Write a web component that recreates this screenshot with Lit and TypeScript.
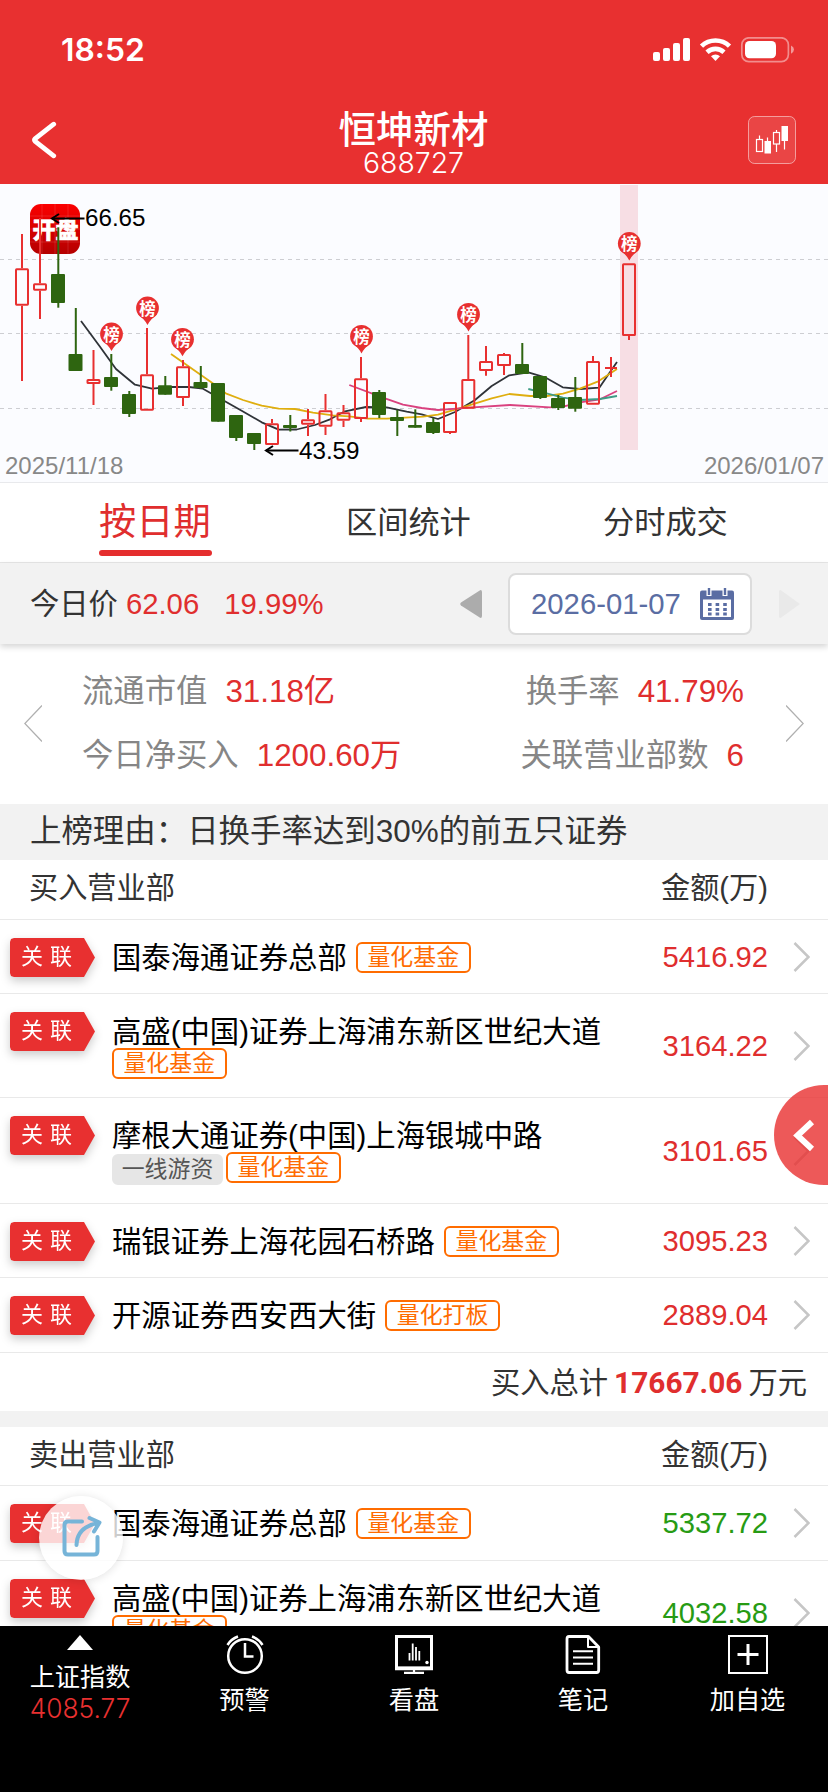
import { LitElement, html, svg, css } from "lit";
import { customElement, property } from "lit/decorators.js";

type Candle = [x: number, high: number, low: number, top: number, bottom: number, up: boolean];

const CANDLES: Candle[] = [
  [22, 234, 381, 268.3, 305.7, true],
  [40, 218, 319, 283.3, 290.7, true],
  [58, 227.3, 307.7, 274, 303, false],
  [75.5, 308, 371, 354, 371, false],
  [93.5, 350, 405, 379, 384, true],
  [111, 354, 390.7, 377, 387, false],
  [129, 391, 417, 394, 414, false],
  [147, 328, 410.7, 374.3, 410.7, true],
  [165, 376, 394.7, 385.3, 394.7, false],
  [183, 360, 406, 366.3, 398, true],
  [200.5, 366, 388.7, 382, 388, false],
  [218, 383, 421.7, 383, 421.7, false],
  [236, 415, 441, 415, 438, false],
  [254, 433, 450, 433, 444, false],
  [272, 419, 445, 423.3, 445, true],
  [290, 415, 431.5, 425, 428, false],
  [308, 409, 436, 419.3, 424.7, true],
  [325.5, 394, 435, 410.3, 426.7, true],
  [343.5, 405, 427, 412.3, 420.7, true],
  [361, 357, 422, 378.3, 419, true],
  [379, 390, 418, 392, 415, false],
  [397, 410, 436, 417, 421, false],
  [415, 409.3, 427.7, 425, 427.7, false],
  [433, 418, 434, 422, 433, false],
  [450, 402, 434, 402, 433, true],
  [468.3, 335, 408.7, 379, 408.7, true],
  [486, 346, 375.7, 361, 371, true],
  [504, 353, 375, 354, 366, true],
  [522, 343, 374, 364, 374, false],
  [540, 376, 399, 376, 398, false],
  [558, 395, 410, 398, 408, false],
  [575, 377, 411.7, 397, 408.7, false],
  [593, 356, 404.7, 361, 404.7, true],
  [611, 357, 377, 367, 369, true],
  [629, 263.3, 340, 263.3, 336, true],
];

const AVERAGES: [string, string][] = [
  ["#2f3338", "81,321 100,346.7 116,369 135,384.7 152,388.7 170,387 189,387 203,388.7 222.7,400 241.7,410.7 261.7,422.3 278.7,429.7 296.7,429.5 315,425 330,419.3 345,411.3 366,407 386.7,407.3 406.7,411.7 421.7,414.3 438,419 455,412 475,400 491.7,386 509.3,375.3 528.3,372.3 545,377.3 562.7,387.3 580,389 599.3,387.7 608,375 617,362"],
  ["#dfae0f", "171,354 212.7,383.3 225.7,393.3 243,400 261.7,405.7 278.7,408.7 295,409 313,412.7 333,415.3 349,416.3 368,418.7 386.7,418.7 405,417.7 423,416.7 438,414.7 461.7,407.7 491.7,398.3 509.3,394 530,396 546.7,396 563,393.7 580,388.7 598.3,381.3 617,369"],
  ["#d9417f", "349.3,385 385,398.3 403,404.7 421.7,408 438,410 456.7,408.7 473,407.3 510,405 550,407.3 563,406.7 580,402.3 600,399.3 617,391"],
  ["#3f9c86", "528.3,389 546.7,393.3 563,397.7 580,400 600,399 617,396"],
];

const PINS: [number, number][] = [
  [111.5, 335], [147.5, 309], [182.5, 340.3], [361.5, 337.4], [468.5, 315.4], [629.3, 244.5],
];

@customElement("kline-chart")
class KlineChart extends LitElement {
  static styles = css`
    :host { display: block; height: 298px; background: #fbfcff; border-bottom: 1px solid #e8e9ec; }
    svg { display: block; }
    .num { font: 24.2px "Liberation Sans", Arial, sans-serif; fill: #000; }
    .date { font: 24px "Liberation Sans", Arial, sans-serif; fill: #888; }
    .pin { font: 700 16.5px "Noto Sans CJK SC", sans-serif; fill: #fff; text-anchor: middle; }
    .app { font: 900 23px "Noto Sans CJK SC", sans-serif; fill: #fff; text-anchor: middle; }
  `;

  private candle([x, high, low, top, bottom, up]: Candle) {
    if (!up) {
      return svg`<path d="M${x + 0.3} ${high}V${low}" stroke="#2e6510" stroke-width="2"/>
        <rect x=${x - 7} y=${top} width="14" height=${bottom - top} rx="1" fill="#2e6510"/>`;
    }
    const flat = bottom - top < 3;
    return svg`<g fill="none" stroke="#e83030" stroke-width="2">
      <path d="M${x} ${high}V${flat ? low : top}M${x} ${bottom}V${low}"/>
      ${flat
        ? svg`<path d=${`M${x - 6} 368H${x + 6}`}/>`
        : svg`<rect x=${x - 6} y=${top + 1} width="12" height=${bottom - top - 2} rx="0.6"/>`}
    </g>`;
  }

  render() {
    return html`<svg width="828" height="298" viewBox="0 184 828 298">
      <defs>
        <linearGradient id="app" x1="0" y1="0" x2="0" y2="1">
          <stop offset="0" stop-color="#fb0000"/><stop offset="1" stop-color="#b40000"/>
        </linearGradient>
      </defs>
      <path d="M0 259.5H828M0 333.5H828M0 408.5H828" stroke="#cdced2" stroke-width="1" stroke-dasharray="4 4"/>
      <rect x="620" y="185" width="18" height="265" fill="#f7dee4"/>
      <rect x="30" y="204" width="50" height="50" rx="11" fill="url(#app)"/>
      <path d="M42 204V254M55 204V254M68 204V254M30 216H80M30 229H80M30 242H80" stroke="#fff" stroke-opacity=".12"/>
      <text class="app" x="55.5" y="238" stroke="#fff" stroke-width=".6">开盘</text>
      ${AVERAGES.map(([c, p]) => svg`<polyline points=${p} fill="none" stroke=${c} stroke-width="1.8" stroke-linejoin="round"/>`)}
      ${CANDLES.map((c) => this.candle(c))}
      ${PINS.map(([x, y]) => svg`
        <path d=${`M${x - 9.5} ${y + 5.5}Q${x - 3} ${y + 10} ${x} ${y + 16}Q${x + 3} ${y + 10} ${x + 9.5} ${y + 5.5}Z`} fill="#e83030"/>
        <circle cx=${x} cy=${y - 1} r="11.4" fill="#e83030"/>
        <text class="pin" x=${x} y=${y + 5.6}>榜</text>`)}
      <g fill="none" stroke="#000" stroke-width="2">
        <path d="M52 218.5H84.5"/><path d="M59 214L52 218.5L59 223"/>
        <path d="M266 450.5H298.5"/><path d="M273 446L266 450.5L273 455"/>
      </g>
      <text class="num" x="85" y="226">66.65</text>
      <text class="num" x="299" y="459">43.59</text>
      <text class="date" x="5" y="473.5">2025/11/18</text>
      <text class="date" x="824" y="473.5" text-anchor="end">2026/01/07</text>
    </svg>`;
  }
}

interface Seat {
  name: string;
  tags: string[];
  amount: string;
  height: number;
  wrap?: boolean;
}

const BUY: Seat[] = [
  { name: "国泰海通证券总部", tags: ["量化基金"], amount: "5416.92", height: 74 },
  { name: "高盛(中国)证券上海浦东新区世纪大道", tags: ["量化基金"], amount: "3164.22", height: 104, wrap: true },
  { name: "摩根大通证券(中国)上海银城中路", tags: ["一线游资", "量化基金"], amount: "3101.65", height: 106, wrap: true },
  { name: "瑞银证券上海花园石桥路", tags: ["量化基金"], amount: "3095.23", height: 74 },
  { name: "开源证券西安西大街", tags: ["量化打板"], amount: "2889.04", height: 75 },
];

const SELL: Seat[] = [
  { name: "国泰海通证券总部", tags: ["量化基金"], amount: "5337.72", height: 75 },
  { name: "高盛(中国)证券上海浦东新区世纪大道", tags: ["量化基金"], amount: "4032.58", height: 104, wrap: true },
];

@customElement("seat-row")
class SeatRow extends LitElement {
  @property({ attribute: false }) seat!: Seat;
  @property({ type: Boolean }) sell = false;

  static styles = css`
    :host { display: block; }
    .row { display: flex; box-sizing: border-box; border-bottom: 1px solid #e9e9e9; padding-left: 10px; background: #fff; }
    .flag { filter: drop-shadow(0 4px 5px rgba(0, 0, 0, .2)); margin-top: 18px; height: 39px; }
    .ribbon {
      box-sizing: border-box; width: 85px; height: 39px; padding-left: 11px; background: #e83030; color: #fff;
      clip-path: polygon(0 4px, 1px 1px, 4px 0, 74px 0, 85px 50%, 74px 100%, 4px 100%, 1px 38px, 0 35px);
      font-size: 22px; line-height: 38px; display: flex; gap: 7px;
    }
    .main { margin: 18px 0 0 17px; flex: 1; display: flex; flex-wrap: wrap; align-content: flex-start; white-space: nowrap; }
    .name { font-size: 29.35px; line-height: 40px; height: 38px; color: #000; }
    .wrap .name { width: 100%; height: 36px; }
    .chip {
      box-sizing: border-box; height: 31px; min-width: 115px; border: 2px solid #ff6c00; border-radius: 6px; color: #ff6c00;
      font-size: 22.9px; line-height: 26px; text-align: center; margin: 4px 0 0 9px;
    }
    .wrap .chip { margin: 0; min-width: 114.5px; }
    .wrap .plain + .chip { margin-left: 3px; }
    .wrap .chip.plain { margin-top: 2px; border-color: #e6e6e6; background: #e6e6e6; color: #555; min-width: 111px; }
    .amount { display: flex; align-items: center; font-size: 29.2px; line-height: 34px; color: #e02e2e; padding-right: 25px; }
    .sell { color: #279b14; }
    .go { align-self: center; margin-right: 18px; display: block; }
  `;

  render() {
    const s = this.seat;
    return html`<div class="row ${s.wrap ? "wrap" : ""}" style="height:${s.height}px">
      <div class="flag"><div class="ribbon"><span>关</span><span>联</span></div></div>
      <div class="main">
        <span class="name">${s.name}</span>
        ${s.tags.map((t) => html`<span class="chip ${t === "一线游资" ? "plain" : ""}">${t}</span>`)}
      </div>
      <div class="amount ${this.sell ? "sell" : ""}">${s.amount}</div>
      <svg class="go" width="17" height="30" viewBox="0 0 17 30"><path d="M1.500 1L15.500 15L1.500 29" fill="none" stroke="#c6c6c6" stroke-width="2.500"/></svg>
    </div>`;
  }
}

@customElement("app-root")
class AppRoot extends LitElement {
  static styles = css`
    :host {
      display: block; position: relative; width: 828px; height: 1792px; overflow: hidden; background: #fff;
      font-family: "Liberation Sans", Arial, "Noto Sans CJK SC", sans-serif; color: #333; white-space: nowrap;
    }
    svg { display: block; }
    .red { color: #e02e2e; }
    .main { height: 1626px; overflow: hidden; }
    header { height: 184px; background: #e83030; color: #fff; box-sizing: border-box; padding-top: 30px; }
    .status { height: 39px; display: flex; justify-content: space-between; align-items: center; padding: 0 34px 0 61px; }
    .clock { font: 600 31.8px/39px Inter, sans-serif; }
    .titlebar { display: flex; justify-content: space-between; height: 115px; padding: 0 32px 0 31px; align-items: center; }
    .title { text-align: center; padding: 29px 0 0 22px; }
    .title h1 { margin: 0; font: 500 37.5px/43px "Noto Sans CJK SC", sans-serif; }
    .title p { margin: 0; font: 300 28.4px/30px Inter, sans-serif; }
    .back { margin-top: 26px; }
    .kbtn { margin-top: 27px; }
    .tabs { display: flex; height: 80px; box-sizing: border-box; padding-left: 99px; border-bottom: 1px solid #e6e6e6; align-items: flex-start; }
    .tab { font-size: 31.2px; line-height: 79px; margin-left: 134px; width: 125px; }
    .tab + .tab + .tab { margin-left: 132px; }
    .tab.on { margin: 0; width: 113px; font-size: 37.3px; color: #e02e2e; }
    .label { display: block; height: 67px; line-height: 79px; }
    .bar { display: block; height: 6px; border-radius: 3px; background: #e52e2e; }
    .price { position: relative; height: 81px; background: #f2f2f2; box-shadow: 0 3px 6px rgba(0, 0, 0, .16); display: flex; align-items: center; padding: 0 28px 0 30px; font-size: 29.3px; line-height: 40px; }
    .price .now { margin-left: 8px; }
    .price .pct { margin-left: 25px; }
    .prev { margin-left: auto; }
    .date { box-sizing: border-box; width: 244px; height: 62px; margin: 0 27px 0 26px; border: 2px solid #dcdcdc; border-radius: 8px; background: #fff; display: flex; align-items: center; justify-content: space-between; padding: 0 16px 0 21px; color: #5a6da3; }
    .stats { height: 160px; display: flex; padding: 0 24px; align-items: center; box-sizing: border-box; padding-bottom: 2px; }
    .grid { flex: 1; display: grid; grid-template-columns: auto auto; justify-content: space-between; row-gap: 22px; padding: 1px 42px 0 40px; font-size: 31.35px; line-height: 42px; color: #868686; }
    .grid .r { text-align: right; }
    .grid .red { margin-left: 18px; }
    .reason { height: 56px; background: #f2f2f2; padding-left: 30px; font-size: 31.45px; line-height: 56px; }
    .head { display: flex; justify-content: space-between; box-sizing: border-box; height: 60px; border-bottom: 1px solid #e9e9e9; padding: 0 60px 0 29px; font-size: 29.2px; line-height: 56px; }
    .head.s { height: 59px; }
    .total { height: 58px; padding-right: 21px; text-align: right; font-size: 29.3px; line-height: 60px; }
    .total b { font: 700 29.8px/58px Roboto, sans-serif; color: #e02e2e; margin: 0 6px; }
    .gap { height: 16px; background: #f2f2f2; }
    nav { height: 166px; background: #000; color: #fff; display: grid; grid-template-columns: 160px 169px 170px 168px 161px; font-size: 25.2px; }
    .item { display: flex; flex-direction: column; align-items: center; padding-top: 9px; line-height: 38px; }
    .item svg { margin-bottom: 6px; }
    .item.index svg { margin-bottom: 8px; }
    .idx { font: 300 26.3px/26px Inter, sans-serif; color: #e83030; }
    .drawer { position: absolute; right: 0; top: 1085px; width: 54px; height: 100px; border-radius: 50px 0 0 50px; background: rgba(232, 48, 48, .8); }
    .share { position: absolute; left: 39px; top: 1496px; width: 84px; height: 84px; border-radius: 50%; background: rgba(255, 255, 255, .8); box-shadow: 0 1px 10px rgba(0, 0, 0, .12); }
  `;

  render() {
    return html`
      <div class="main">
        <header>
          <div class="status">
            <span class="clock">18:52</span>
            <svg width="141" height="26" viewBox="653 37 141 26" fill="#fff">
              <rect x="653" y="52" width="7" height="9" rx="2"/><rect x="663" y="48" width="7" height="13" rx="2"/>
              <rect x="673" y="43" width="7" height="18" rx="2"/><rect x="683" y="38" width="7" height="23" rx="2"/>
              <path d="M701.500 46.200A20 20 0 0 1 729.500 46.200M707 52.200A12.500 12.500 0 0 1 724 52.200" fill="none" stroke="#fff" stroke-width="4.600"/>
              <path d="M715.500 61L711 56.300A6.500 6.500 0 0 1 720 56.300Z"/>
              <rect x="741.800" y="37.800" width="46.600" height="23.800" rx="7" fill="none" stroke="#fff" stroke-opacity=".45" stroke-width="1.700"/>
              <rect x="745" y="41" width="31" height="17.300" rx="4.500"/>
              <path d="M791 45.500Q794 47 794 49.600T791 53.700Z" fill-opacity=".5"/>
            </svg>
          </div>
          <div class="titlebar">
            <svg class="back" width="26" height="38" viewBox="31 121 26 38"><path d="M53.700 124.200L35.300 138.500Q33.800 140 35.300 141.500L53.700 155.800" fill="none" stroke="#fff" stroke-width="4.800" stroke-linecap="round"/></svg>
            <div class="title"><h1>恒坤新材</h1><p>688727</p></div>
            <svg class="kbtn" width="48" height="48" viewBox="748 116 48 48">
              <rect x="748.500" y="116.500" width="47" height="47" rx="6" fill="#fff" fill-opacity=".1" stroke="#fff" stroke-opacity=".5"/>
              <g fill="none" stroke="#fff" stroke-width="1.200">
                <path d="M759.500 135.500V139M767.500 137.500V142M776.500 130V133M776.500 144V152M784.500 140V149.500"/>
                <rect x="756.500" y="139.500" width="6" height="12"/><rect x="773.500" y="132.500" width="6" height="11.500"/>
              </g>
              <path d="M764.500 141h6.500v12.500h-6.500zM781.500 126h6.500v15h-6.500z" fill="#fff"/>
            </svg>
          </div>
        </header>
        <kline-chart></kline-chart>
        <div class="tabs">
          <div class="tab on"><span class="label">按日期</span><span class="bar"></span></div>
          <div class="tab">区间统计</div>
          <div class="tab">分时成交</div>
        </div>
        <div class="price">
          <span>今日价</span><span class="red now">62.06</span><span class="red pct">19.99%</span>
          <svg class="prev" width="22" height="28" viewBox="0 0 22 28"><path d="M20.500 0Q22 0 22 2V26Q22 28 20.500 28L1 15.500Q-.5 14 1 12.500Z" fill="#acacac"/></svg>
          <div class="date"><span>2026-01-07</span>
            <svg width="34" height="32" viewBox="0 0 34 32">
              <path d="M2 2.500H32Q34 2.500 34 4.500V30Q34 32 32 32H2Q0 32 0 30V4.500Q0 2.500 2 2.500Z" fill="#5a6da3"/>
              <rect x="3" y="11.500" width="28" height="17.500" fill="#fff"/>
              <path d="M9 0V8M25 0V8" stroke="#fff" stroke-width="5"/><path d="M9 0V7M25 0V7" stroke="#5a6da3" stroke-width="2.400"/>
              <path d="M8 16.500H28M8 21.500H28M8 26H28" stroke="#5a6da3" stroke-width="2.800" stroke-dasharray="3.600 4"/>
            </svg>
          </div>
          <svg width="21" height="28" viewBox="0 0 21 28"><path d="M0 1Q0 0 1.500 0L21 14L1.500 28Q0 28 0 27Z" fill="#e9e9e9"/></svg>
        </div>
        <div class="stats">
          <svg width="18" height="37" viewBox="0 0 18 37"><path d="M18 .5L.8 18.500L18 36.500" fill="none" stroke="#b0b0b0" stroke-width="1.300"/></svg>
          <div class="grid">
            <div>流通市值<span class="red">31.18亿</span></div>
            <div class="r">换手率<span class="red">41.79%</span></div>
            <div>今日净买入<span class="red">1200.60万</span></div>
            <div class="r">关联营业部数<span class="red">6</span></div>
          </div>
          <svg width="18" height="37" viewBox="0 0 18 37"><path d="M0 .5L17.200 18.500L0 36.500" fill="none" stroke="#b0b0b0" stroke-width="1.300"/></svg>
        </div>
        <div class="reason">上榜理由：日换手率达到30%的前五只证券</div>
        <div class="head"><span>买入营业部</span><span>金额(万)</span></div>
        ${BUY.map((s) => html`<seat-row .seat=${s}></seat-row>`)}
        <div class="total">买入总计<b>17667.06</b>万元</div>
        <div class="gap"></div>
        <div class="head s"><span>卖出营业部</span><span>金额(万)</span></div>
        ${SELL.map((s) => html`<seat-row .seat=${s} sell></seat-row>`)}
      </div>
      <nav>
        <div class="item index">
          <svg width="26" height="15" viewBox="0 0 26 15"><path d="M13 0L26 15H0Z" fill="#fff"/></svg>
          <span>上证指数</span><span class="idx">4085.77</span>
        </div>
        <div class="item">
          <svg width="38" height="40" viewBox="226 1636 38 40" fill="none" stroke="#fff" stroke-width="2.500">
            <circle cx="245" cy="1657" r="16.800"/><path d="M245 1644V1657.500H253.500"/>
            <path d="M227.500 1646Q231 1640 238 1637.500M262.500 1646Q259 1640 252 1637.500"/>
          </svg><span>预警</span>
        </div>
        <div class="item">
          <svg width="38" height="40" viewBox="395 1636 38 40" fill="none" stroke="#fff" stroke-width="3">
            <path d="M396.500 1637.500H431.500V1669H396.500Z"/><path d="M395 1669.500H433" stroke-width="3.500"/>
            <path d="M414 1670V1674M404 1673.800H424" stroke-width="2.200"/>
            <path d="M409.500 1654V1661.500M412.700 1644.500V1661.500M416 1648V1661.500M419.300 1652V1661.500" stroke-width="1.800"/>
            <circle cx="427" cy="1663.500" r="1.700" fill="#fff" stroke="none"/>
          </svg><span>看盘</span>
        </div>
        <div class="item">
          <svg width="36" height="40" viewBox="565 1636 36 40" fill="none" stroke="#fff" stroke-width="2.800" stroke-linejoin="round">
            <path d="M569 1637.500H588.500L598.700 1648V1671Q598.700 1673.500 596.500 1673.500H569Q567 1673.500 567 1671V1640Q567 1637.500 569 1637.500Z"/>
            <path d="M588 1638V1648H598.500" stroke-width="2"/>
            <path d="M573 1652.300H593M573 1658.500H593M573 1664.700H593" stroke-width="1.900"/>
          </svg><span>笔记</span>
        </div>
        <div class="item">
          <svg width="40" height="40" viewBox="728 1636 40 40" fill="none" stroke="#fff">
            <rect x="729" y="1637" width="38" height="37" stroke-width="2"/><path d="M748 1645V1666M737.500 1655.500H758.500" stroke-width="3"/>
          </svg><span>加自选</span>
        </div>
      </nav>
      <div class="drawer"><svg width="54" height="100" viewBox="774 1085 54 100"><path d="M812 1122L797.500 1135.500L812 1149" fill="none" stroke="#fff" stroke-width="6"/></svg></div>
      <div class="share"><svg width="84" height="84" viewBox="39 1496 84 84" fill="none" stroke="#76b4d8" stroke-width="4" stroke-linecap="round" stroke-linejoin="round">
        <path d="M82 1521.500H68Q64.500 1521.500 64.500 1525V1551Q64.500 1554.500 68 1554.500H94Q97.500 1554.500 97.500 1551V1537"/>
        <path d="M76.500 1545Q77 1527 98 1523M89.500 1518L99.500 1522.500L94 1531.500"/>
      </svg></div>
    `;
  }
}
